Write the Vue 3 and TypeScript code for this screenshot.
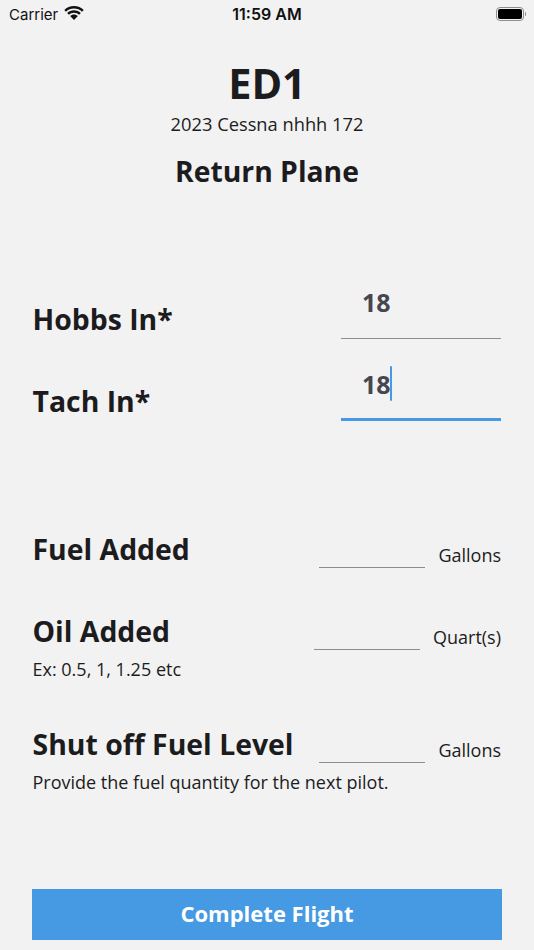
<template>
  <div class="screen">
    <div class="status-bar">
      <div class="status-left">
        <span>Carrier</span>
        <svg class="wifi" width="20" height="14" viewBox="0 0 20 14">
          <path d="M10 0C6.200 0 2.800 1.500.3 3.900l1.700 1.800C4.100 3.700 6.900 2.500 10 2.500s5.900 1.200 8 3.200l1.700-1.800C17.200 1.500 13.800 0 10 0z" fill="#111" />
          <path d="M10 4.200c-2.600 0-5 1-6.800 2.700l1.700 1.800C6.200 7.400 8 6.700 10 6.700s3.800.7 5.100 2l1.700-1.800C15 5.200 12.600 4.200 10 4.200z" fill="#111" />
          <path d="M10 8.400c-1.500 0-2.900.6-3.900 1.500L10 14l3.900-4.100c-1-.9-2.400-1.500-3.900-1.500z" fill="#111" />
        </svg>
      </div>
      <span class="status-time">11:59 AM</span>
      <div class="status-right">
        <div class="battery"><div class="battery-fill"></div></div>
        <div class="battery-cap"></div>
      </div>
    </div>

    <header class="head">
      <h1 class="plane">ED1</h1>
      <div class="model">2023 Cessna nhhh 172</div>
      <h2 class="page-title">Return Plane</h2>
    </header>

    <section class="meters">
      <div class="meter-row" v-for="m in meters" :key="m.label">
        <span class="big-label">{{ m.label }}</span>
        <div class="meter-input" :class="{ active: m.active }">
          <span class="meter-value">{{ m.value }}</span>
          <span v-if="m.active" class="caret"></span>
        </div>
      </div>
    </section>

    <section class="extras">
      <div class="extra" v-for="e in extras" :key="e.label">
        <div class="extra-row">
          <span class="big-label">{{ e.label }}</span>
          <div class="extra-field">
            <div class="extra-line"></div>
            <span class="extra-unit">{{ e.unit }}</span>
          </div>
        </div>
        <div v-if="e.hint" class="hint">{{ e.hint }}</div>
      </div>
    </section>

    <button class="complete">Complete Flight</button>
  </div>
</template>

<script setup lang="ts">
interface Meter {
  label: string
  value: string
  active?: boolean
}

interface Extra {
  label: string
  unit: string
  hint?: string
}

const meters: Meter[] = [
  { label: 'Hobbs In*', value: '18' },
  { label: 'Tach In*', value: '18', active: true }
]

const extras: Extra[] = [
  { label: 'Fuel Added', unit: 'Gallons' },
  { label: 'Oil Added', unit: 'Quart(s)', hint: 'Ex: 0.5, 1, 1.25 etc' },
  { label: 'Shut off Fuel Level', unit: 'Gallons', hint: 'Provide the fuel quantity for the next pilot.' }
]
</script>

<style>
html,
body {
  margin: 0;
  background: #f2f2f2;
}
</style>

<style scoped>
.screen {
  width: 534px;
  height: 950px;
  box-sizing: border-box;
  background: #f2f2f2;
  color: #1c1c1e;
  font-family: 'Open Sans', 'Liberation Sans', sans-serif;
  overflow: hidden;
}

.status-bar {
  height: 28px;
  padding: 0 8px 0 9px;
  display: flex;
  align-items: center;
  justify-content: space-between;
  position: relative;
  font-family: Inter, 'Liberation Sans', sans-serif;
  font-size: 15px;
  color: #111;
}

.status-left {
  display: flex;
  align-items: center;
  gap: 6px;
}

.wifi {
  margin-top: -2px;
}

.status-time {
  position: absolute;
  left: 0;
  right: 0;
  text-align: center;
  font-size: 16px;
  font-weight: 600;
}

.status-right {
  display: flex;
  align-items: center;
  gap: 1px;
}

.battery {
  width: 28px;
  height: 14px;
  box-sizing: border-box;
  border: 1px solid #8e8e8e;
  border-radius: 4px;
  padding: 1px;
  display: flex;
}

.battery-fill {
  flex: 1;
  background: #000;
  border-radius: 2px;
}

.battery-cap {
  width: 1.5px;
  height: 4px;
  background: #8e8e8e;
  border-radius: 0 1px 1px 0;
}

.head {
  text-align: center;
  padding-top: 27px;
}

.plane {
  margin: 0;
  font-size: 41.500px;
  line-height: 56px;
  font-weight: 700;
}

.model {
  font-size: 18.300px;
  line-height: 24px;
  margin-top: 1px;
}

.page-title {
  margin: 16px 0 0;
  font-size: 28.300px;
  line-height: 38px;
  font-weight: 700;
}

.meters {
  margin-top: 95px;
  padding: 0 33px 0 32.500px;
}

.meter-row {
  display: flex;
  justify-content: space-between;
  height: 82px;
}

.big-label {
  font-size: 28.400px;
  line-height: 38px;
  font-weight: 700;
  white-space: nowrap;
}

.meter-row .big-label {
  margin-top: 15px;
}

.meter-input {
  width: 160px;
  height: 54px;
  box-sizing: border-box;
  border-bottom: 1px solid #8e8e8e;
  padding-left: 21px;
  display: flex;
  align-items: flex-start;
}

.meter-input.active {
  border-bottom: 3px solid #459ae3;
}

.meter-value {
  font-size: 25px;
  line-height: 34px;
  font-weight: 700;
  color: #46464f;
}

.caret {
  width: 2.500px;
  height: 35px;
  margin: -1px 0 0 -1px;
  background: #459ae3;
  border-radius: 1px;
}

.extras {
  margin-top: 80px;
  padding: 0 33px 0 32.500px;
}

.extra {
  margin-bottom: 43px;
}

.extra-row {
  display: flex;
  justify-content: space-between;
  align-items: flex-start;
}

.extra-row .big-label {
  margin-top: 0.500px;
}

.extra-field {
  display: flex;
  align-items: flex-end;
  gap: 13px;
  height: 39px;
}

.extra-line {
  width: 106px;
  height: 1px;
  background: #8e8e8e;
}

.extra-unit {
  font-size: 18px;
  line-height: 24px;
  margin-bottom: 1px;
}

.hint {
  font-size: 18px;
  line-height: 24px;
  margin-top: 7px;
}

.complete {
  display: block;
  width: 470px;
  height: 51px;
  margin: 95px 0 0 32px;
  padding: 0 0 4px;
  border: 0;
  background: #459ae3;
  color: #fff;
  font-family: 'Open Sans', 'Liberation Sans', sans-serif;
  font-size: 22px;
  font-weight: 700;
}
</style>
